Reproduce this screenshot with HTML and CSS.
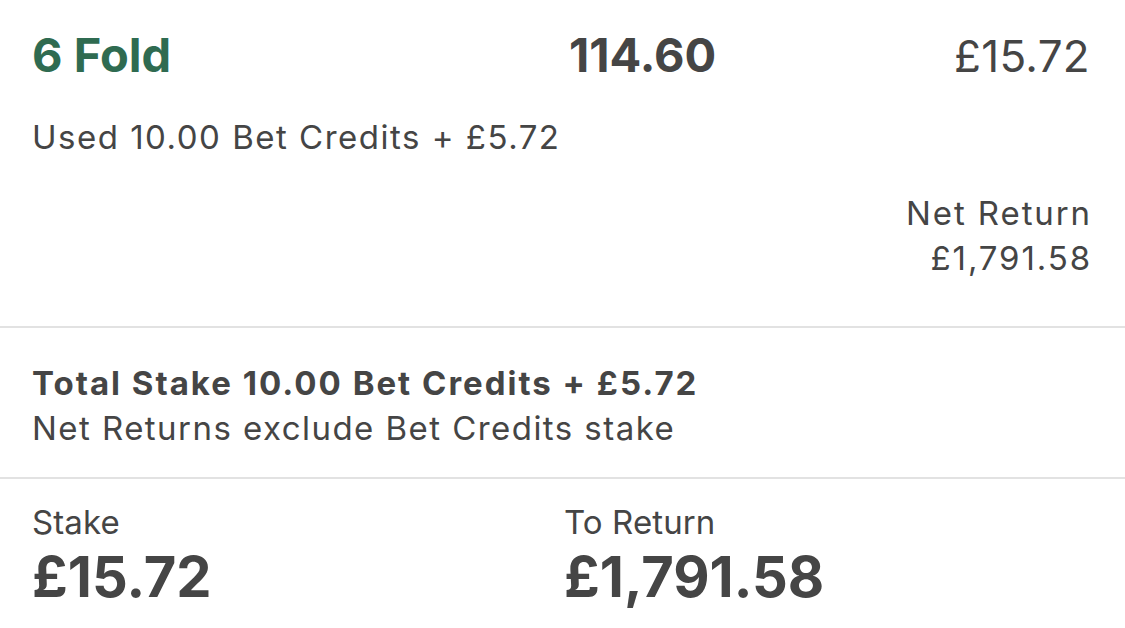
FILE: index.html
```html
<!DOCTYPE html>
<html lang="en">
<head>
<meta charset="utf-8">
<title>Bet slip</title>
<link rel="stylesheet" href="styles.css">
</head>
<body>
<main class="slip">
  <section class="bet">
    <div class="bet-head">
      <div class="bet-type">6 Fold</div>
      <div class="bet-odds">114.60</div>
      <div class="bet-stake">£15.72</div>
    </div>
    <div class="bet-used">Used 10.00 Bet Credits + £5.72</div>
    <div class="bet-return">
      <div>Net Return</div>
      <div>£1,791.58</div>
    </div>
  </section>
  <section class="summary">
    <div class="summary-title">Total Stake 10.00 Bet Credits + £5.72</div>
    <div class="summary-note">Net Returns exclude Bet Credits stake</div>
  </section>
  <section class="totals">
    <div class="total">
      <div class="total-label">Stake</div>
      <div class="total-value">£15.72</div>
    </div>
    <div class="total">
      <div class="total-label">To Return</div>
      <div class="total-value">£1,791.58</div>
    </div>
  </section>
</main>
</body>
</html>
```

FILE: styles.css
```css
html, body {
  margin: 0;
  padding: 0;
  background: #ffffff;
}

body {
  font-family: Inter, "Liberation Sans", sans-serif;
  color: #454545;
}

.slip {
  width: 1125px;
}

.bet {
  padding: 27px 36px 0 32px;
  border-bottom: 2px solid #e2e2e2;
  box-sizing: border-box;
  height: 328px;
}

.bet-head {
  display: grid;
  grid-template-columns: 537px 1fr auto;
  align-items: baseline;
  line-height: 56px;
}

.bet-type {
  font-size: 47px;
  font-weight: 700;
  color: #2f6b51;
}

.bet-odds {
  font-size: 47px;
  font-weight: 700;
}

.bet-stake {
  font-size: 44px;
  font-weight: 400;
  letter-spacing: 0.3px;
  margin-right: -1px;
}

.bet-used {
  margin-top: 33px;
  font-size: 33px;
  line-height: 40px;
  letter-spacing: 1.5px;
}

.bet-return {
  margin-top: 34px;
  margin-right: -3px;
  text-align: right;
  font-size: 33px;
  line-height: 45px;
  letter-spacing: 1.9px;
}

.summary {
  padding: 33px 32px 0 32px;
  height: 151px;
  box-sizing: border-box;
  border-bottom: 2px solid #e2e2e2;
}

.summary-title {
  font-size: 33px;
  font-weight: 700;
  line-height: 45px;
  letter-spacing: 2px;
}

.summary-note {
  font-size: 33px;
  line-height: 45px;
  letter-spacing: 1.45px;
}

.totals {
  display: grid;
  grid-template-columns: 532px 1fr;
  padding: 21px 32px 0 32px;
}

.total-label {
  font-size: 33px;
  line-height: 45px;
  letter-spacing: 0.1px;
}

.total-value {
  font-size: 56px;
  font-weight: 700;
  line-height: 64px;
}
```
